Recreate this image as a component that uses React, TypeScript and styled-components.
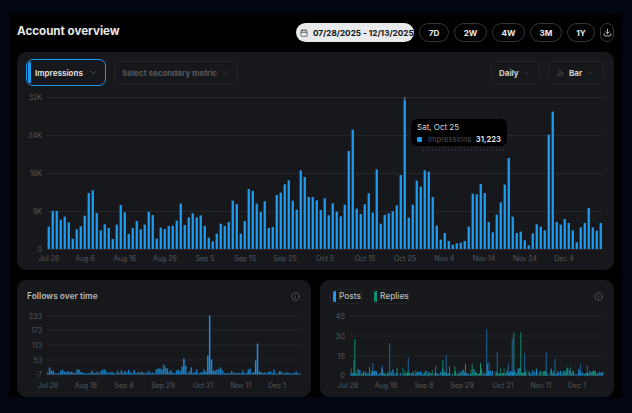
import React from "react";
import styled, { createGlobalStyle } from "styled-components";
import { Calendar, ChevronDown, Download, Info, ChartNoAxesColumn } from "lucide-react";

const Global = createGlobalStyle`
  html, body { margin: 0; padding: 0; background: #020612; width: 632px; height: 413px; overflow: hidden; }
  body { font-family: Inter, "Liberation Sans", sans-serif; -webkit-font-smoothing: antialiased; }
`;

const Shell = styled.div`
  margin: 13px 10px 0 9px;
  height: 384px;
  padding: 0 8px;
  background: #000;
  display: flex;
  flex-direction: column;
  gap: 10px;
`;
const Header = styled.header`
  height: 29px;
  margin-bottom: -10px;
  padding-top: 10px;
  display: flex;
  align-items: flex-start;
  justify-content: space-between;
`;
const Title = styled.h1`
  margin: 1px 0 0;
  font-size: 11.6px;
  line-height: 15px;
  font-weight: 700;
  color: #e7e9ea;
`;
const Ranges = styled.div`
  display: flex;
  gap: 5px;
  height: 19px;
`;
const DatePill = styled.div`
  width: 118px;
  box-sizing: border-box;
  padding-left: 4px;
  display: flex;
  align-items: center;
  gap: 5px;
  border-radius: 10px;
  background: #e7e9ea;
  color: #0f1419;
  font-size: 8.2px;
  font-weight: 700;
  white-space: nowrap;
`;
const RangeButton = styled.div<{ $w: number }>`
  width: ${(p) => p.$w}px;
  box-sizing: border-box;
  display: flex;
  align-items: center;
  justify-content: center;
  border: 1px solid #33363a;
  border-radius: 10px;
  color: #e7e9ea;
  font-size: 8.2px;
  font-weight: 700;
`;
const Panel = styled.section<{ $h: number }>`
  position: relative;
  height: ${(p) => p.$h}px;
  background: #17181c;
  border-radius: 9px;
  overflow: hidden;
`;
const Toolbar = styled.div`
  height: 40px;
  padding: 1px 10px 0 9px;
  box-sizing: border-box;
  display: flex;
  align-items: center;
  gap: 8px;
`;
const Spacer = styled.div`
  flex: 1;
`;
const MetricActive = styled.div`
  width: 80px;
  height: 27px;
  box-sizing: border-box;
  padding: 2px 0 2px 1px;
  display: flex;
  align-items: center;
  gap: 4px;
  border: 1.5px solid #1d9bf0;
  border-radius: 7px;
  color: #d9dadb;
  font-size: 8px;
  font-weight: 700;
`;
const ColorBar = styled.span<{ $c: string; $h?: number }>`
  width: 3px;
  height: ${(p) => p.$h ?? 21}px;
  border-radius: 2px 0 0 2px;
  background: ${(p) => p.$c};
  flex: none;
`;
const Select = styled.div<{ $w: number; $dim?: boolean }>`
  width: ${(p) => p.$w}px;
  height: 23px;
  box-sizing: border-box;
  padding: 0 8px 0 7px;
  display: flex;
  align-items: center;
  justify-content: space-between;
  gap: 4px;
  border: 1px solid #202226;
  border-radius: 5px;
  color: ${(p) => (p.$dim ? "#55585d" : "#cfd0d2")};
  font-size: 8px;
  font-weight: 700;
  white-space: nowrap;
`;
const Group = styled.span`
  display: inline-flex;
  align-items: center;
  gap: 5px;
`;
const Chart = styled.svg`
  display: block;
`;
const Tooltip = styled.div`
  position: absolute;
  left: 394px;
  top: 67px;
  width: 96px;
  height: 27px;
  box-sizing: border-box;
  padding: 3px 6px;
  background: #000;
  border-radius: 6px;
  display: flex;
  flex-direction: column;
  gap: 1px;
`;
const TipDate = styled.div`
  font-size: 8px;
  line-height: 11px;
  color: #d6d7d8;
`;
const TipRow = styled.div`
  display: flex;
  align-items: center;
  font-size: 7.6px;
  line-height: 11px;
  color: #4e5157;
`;
const TipSwatch = styled.span`
  width: 5px;
  height: 5px;
  margin-right: 6px;
  border-radius: 1px;
  background: #1d9bf0;
`;
const TipValue = styled.span`
  margin-left: auto;
  color: #dcdddf;
  font-weight: 700;
`;
const Row = styled.div`
  display: grid;
  grid-template-columns: 294px 294px;
  gap: 9px;
`;
const CardHead = styled.div`
  height: 28px;
  padding: 4px 11px 0 10px;
  box-sizing: border-box;
  display: flex;
  align-items: center;
  justify-content: space-between;
  color: #77797e;
`;
const CardTitle = styled.h2`
  margin: 0;
  font-size: 8.4px;
  font-weight: 600;
  color: #b9babc;
`;
const Legend = styled.div`
  display: flex;
  gap: 9px;
`;
const LegendChip = styled.div<{ $w: number }>`
  width: ${(p) => p.$w}px;
  height: 15px;
  box-sizing: border-box;
  padding-left: 2px;
  display: flex;
  align-items: center;
  gap: 3px;
  border: 1px solid #202226;
  border-radius: 4px;
  font-size: 8.3px;
  font-weight: 500;
  color: #b9babc;
`;

const z3 = [290,243,243,269,260,277,326,298,289,257,189,181,249,301,283,294,327,284,225,247,312,294,273,298,284,245,255,326,293,297,288,287,272,221,285,262,250,262,256,288,323,334,311,281,288,276,212,222,311,273,177,183,221,246,214,294,291,195,188,163,151,212,239,121,141,201];
const z4 = [322,332,361,326,377,341,366,380,345,184,120,357,373,344,311,369,239,402,376,371,365,347,256,32,384,345,273,291,242,246,322,408,450,430,454,465,461,459,454,411,312,314,283,310,397,428,375,338,285,205,381,430,426,452,467,431,404,411,422,135,66,397,405,388,400,422,458,413,400,355,413,423,400];
const impressions = [...z3.map((t) => (357 - t) / 3), ...z4.map((t) => (478 - t) / 3)];

function rng(seed: number) {
  let s = seed;
  return () => {
    s = (s * 1664525 + 1013904223) % 4294967296;
    return s / 4294967296;
  };
}

const BLUE = "#1d9bf0";
const MAIN_TOP = 92;

function MainChart() {
  const ticks: [string, number][] = [["32K", 97], ["24K", 135], ["16K", 173], ["8K", 211], ["0", 249]];
  const xs: [string, number][] = [["Jul 28", 49], ["Aug 6", 85], ["Aug 16", 125], ["Aug 26", 165], ["Sep 5", 205], ["Sep 15", 245], ["Sep 25", 285], ["Oct 5", 325], ["Oct 15", 365], ["Oct 25", 405], ["Nov 4", 444.5], ["Nov 14", 484], ["Nov 24", 525], ["Dec 4", 564]];
  return (
    <Chart width={597} height={178} viewBox={`17 ${MAIN_TOP} 597 178`}>
      {ticks.map(([l, y]) => (
        <g key={l}>
          <line x1={47} x2={603} y1={y + 0.5} y2={y + 0.5} stroke="#25272b" strokeWidth={1} />
          <text x={42} y={y + 2.5} textAnchor="end" fontSize={7} fill="#56595e" fontFamily="Inter">{l}</text>
        </g>
      ))}
      {impressions.map((h, i) => (
        <rect key={i} x={47.6 + i * 4.0} y={249 - h} width={2.3} height={h} fill={BLUE} />
      ))}
      <rect x={403.6} y={97} width={2.3} height={3} fill="#55585c" />
      {xs.map(([l, x]) => (
        <text key={l} x={x} y={261} textAnchor="middle" fontSize={7} fill="#56595e" fontFamily="Inter">{l}</text>
      ))}
      <line x1={423} x2={504} y1={150} y2={150} stroke="#55585c" strokeWidth={0.8} strokeDasharray="1 2.2" />
    </Chart>
  );
}

const followSpikes: Record<number, number> = { 87: 19, 88: 59, 89: 15, 90: 4, 91: 4, 92: 5, 93: 5, 94: 7, 95: 4, 74: 16, 75: 9, 73: 8, 63: 10, 64: 7, 65: 6, 62: 5, 61: 6, 60: 6, 59: 5, 78: 7, 71: 5, 113: 14, 114: 31, 115: 3, 1: 7, 2: 4, 8: 5, 9: 3, 16: 5, 17: 5, 30: 5, 31: 5, 109: 5, 110: 6 };
const rf = rng(7);
const follows = Array.from({ length: 138 }, (_, i) => followSpikes[i] ?? 1 + rf() * rf() * 5);

function FollowsChart() {
  const ticks: [string, number][] = [["233", 316], ["173", 330], ["113", 345], ["53", 360], ["-7", 374.5]];
  const xs: [string, number][] = [["Jul 28", 48], ["Aug 18", 86], ["Sep 8", 124], ["Sep 29", 163], ["Oct 21", 203], ["Nov 11", 241], ["Dec 1", 277]];
  return (
    <Chart width={294} height={89} viewBox="17 308 294 89">
      {ticks.map(([l, y]) => (
        <g key={l}>
          <line x1={47} x2={300} y1={y} y2={y} stroke="#25272b" />
          <text x={42} y={y + 2.5} textAnchor="end" fontSize={7} fill="#56595e" fontFamily="Inter">{l}</text>
        </g>
      ))}
      {follows.map((h, i) => (
        <rect key={i} x={47 + i * 1.84} y={374.5 - h} width={1.5} height={h} fill={BLUE} opacity={h > 12 ? 0.9 : 0.78} />
      ))}
      {xs.map(([l, x]) => (
        <text key={l} x={x} y={388} textAnchor="middle" fontSize={7} fill="#56595e" fontFamily="Inter">{l}</text>
      ))}
    </Chart>
  );
}

const rp = rng(21);
const dimSpikes: [number, number][] = [[513, 137], [590, 110], [222, 97], [545, 70], [627, 67], [692, 70], [718, 50], [278, 54], [392, 62], [115, 47], [795, 34], [815, 30], [172, 37], [520, 40], [200, 30], [360, 30], [578, 35]];
const greenSpikes: [number, number][] = [[118, 110], [595, 129], [616, 129], [382, 45], [495, 38], [162, 26], [402, 28], [418, 26], [450, 36], [470, 34], [516, 35], [245, 24]];
const posts = Array.from({ length: 138 }, () => (rp() < 0.1 ? 0 : 1.5 + rp() * rp() * 7));
const replies = Array.from({ length: 138 }, () => (rp() < 0.3 ? 0 : 1.5 + rp() * rp() * 8));

function PostsChart() {
  const ticks: [string, number][] = [["45", 316], ["30", 336], ["15", 356], ["0", 375.5]];
  const xs: [string, number][] = [["Jul 28", 348], ["Aug 18", 386], ["Sep 8", 424], ["Sep 29", 462], ["Oct 21", 503], ["Nov 11", 541], ["Dec 1", 577]];
  return (
    <Chart width={294} height={89} viewBox="320 308 294 89">
      {ticks.map(([l, y]) => (
        <g key={l}>
          <line x1={350} x2={603} y1={y} y2={y} stroke="#25272b" />
          <text x={345} y={y + 2.5} textAnchor="end" fontSize={7.4} fill="#56595e" fontFamily="Inter">{l}</text>
        </g>
      ))}
      {dimSpikes.map(([zx, zh]) => (
        <rect key={zx} x={315 + zx / 3} y={375.5 - zh / 3} width={1.2} height={zh / 3} fill="#1c5a85" />
      ))}
      {posts.map((h, i) => (
        <rect key={i} x={350 + i * 1.84} y={375.5 - h} width={1.3} height={h} fill={BLUE} opacity={0.8} />
      ))}
      {replies.map((h, i) => (
        <rect key={i} x={350.9 + i * 1.84} y={375.5 - h} width={0.9} height={h} fill="#0f8f6c" opacity={0.85} />
      ))}
      {greenSpikes.map(([zx, zh]) => (
        <rect key={zx} x={315 + zx / 3} y={375.5 - zh / 3} width={1} height={zh / 3} fill="#11906c" />
      ))}
      {xs.map(([l, x]) => (
        <text key={l} x={x} y={388} textAnchor="middle" fontSize={7} fill="#56595e" fontFamily="Inter">{l}</text>
      ))}
    </Chart>
  );
}

export default function App() {
  return (
    <>
      <Global />
      <Shell>
        <Header>
          <Title>Account overview</Title>
          <Ranges>
            <DatePill>
              <Calendar size={8} strokeWidth={1.6} />
              07/28/2025 - 12/13/2025
            </DatePill>
            <RangeButton $w={30}>7D</RangeButton>
            <RangeButton $w={33}>2W</RangeButton>
            <RangeButton $w={33}>4W</RangeButton>
            <RangeButton $w={32}>3M</RangeButton>
            <RangeButton $w={28}>1Y</RangeButton>
            <RangeButton $w={14}>
              <Download size={9} strokeWidth={2} />
            </RangeButton>
          </Ranges>
        </Header>
        <Panel $h={218}>
          <Toolbar>
            <MetricActive>
              <ColorBar $c={BLUE} />
              Impressions
              <ChevronDown size={9} strokeWidth={1.4} color="#8a8c90" style={{ marginLeft: 2 }} />
            </MetricActive>
            <Select $w={124} $dim>
              Select secondary metric
              <ChevronDown size={9} strokeWidth={1.4} />
            </Select>
            <Spacer />
            <Select $w={49}>
              Daily
              <ChevronDown size={9} strokeWidth={1.4} color="#55585d" />
            </Select>
            <Select $w={56}>
              <Group>
                <ChartNoAxesColumn size={8} strokeWidth={1.6} color="#77797d" />
                Bar
              </Group>
              <ChevronDown size={9} strokeWidth={1.4} color="#55585d" />
            </Select>
          </Toolbar>
          <MainChart />
          <Tooltip>
            <TipDate>Sat, Oct 25</TipDate>
            <TipRow>
              <TipSwatch />
              Impressions
              <TipValue>31,223</TipValue>
            </TipRow>
          </Tooltip>
        </Panel>
        <Row>
          <Panel $h={117}>
            <CardHead>
              <CardTitle>Follows over time</CardTitle>
              <Info size={9} strokeWidth={1.5} />
            </CardHead>
            <FollowsChart />
          </Panel>
          <Panel $h={117}>
            <CardHead>
              <Legend>
                <LegendChip $w={32}>
                  <ColorBar $c={BLUE} $h={11} />
                  Posts
                </LegendChip>
                <LegendChip $w={38}>
                  <ColorBar $c="#0f8f6c" $h={11} />
                  Replies
                </LegendChip>
              </Legend>
              <Info size={9} strokeWidth={1.5} />
            </CardHead>
            <PostsChart />
          </Panel>
        </Row>
      </Shell>
    </>
  );
}
